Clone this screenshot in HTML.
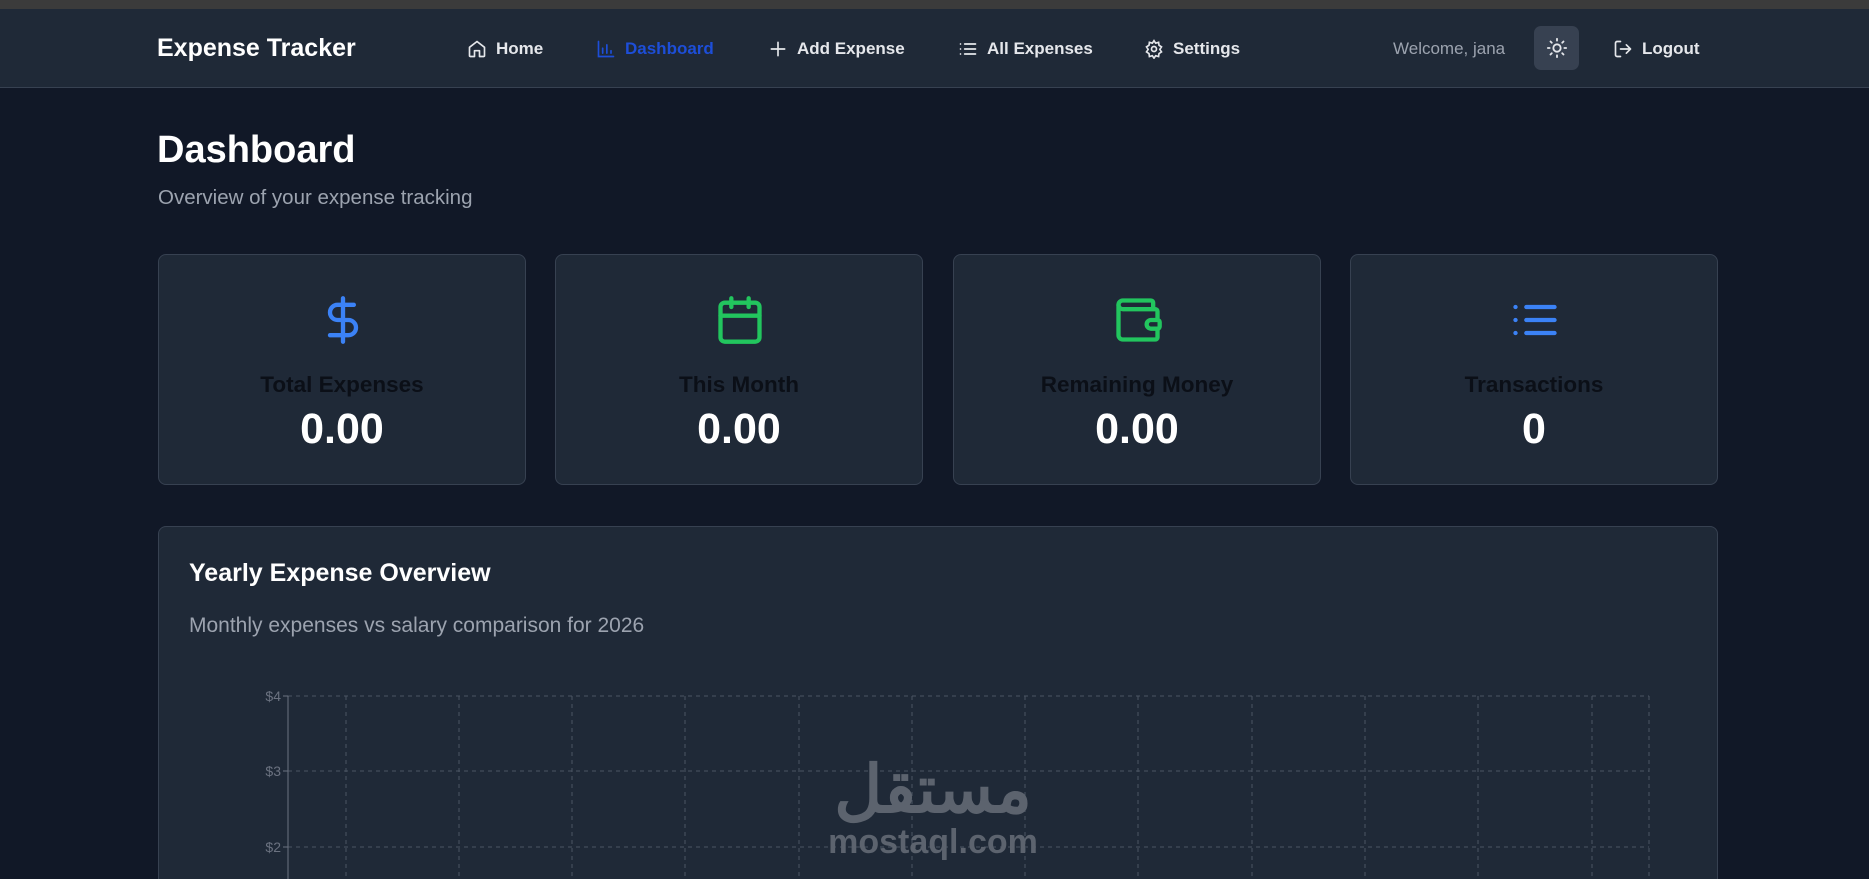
<!DOCTYPE html>
<html><head><meta charset="utf-8"><style>
*{margin:0;padding:0;box-sizing:border-box}
html{width:1869px;height:879px;overflow:hidden}
body{width:1869px;height:879px;overflow:hidden;background:#111827;font-family:"Liberation Sans",sans-serif;position:relative}
.top{position:absolute;left:0;top:0;width:1869px;height:9px;background:#3b3b3b}
nav{position:absolute;left:0;top:9px;width:1869px;height:79px;background:#1f2937;border-bottom:1px solid #374151}
.a{position:absolute;top:0;height:79px;display:flex;align-items:center;color:#e5e7eb;font-size:17px;font-weight:600}
.a svg{margin-right:9px}
.logo{left:157px;font-size:25px;font-weight:700;color:#fff}
h1{position:absolute;left:157px;top:129px;font-size:38px;color:#fff;font-weight:700}
.sub{position:absolute;left:158px;top:186px;font-size:20.5px;color:#9ca3af}
.card{position:absolute;top:254px;width:368px;height:231px;background:#1f2937;border:1px solid #374151;border-radius:8px;text-align:center}
.card svg{position:absolute;left:158px;top:37px}
.lbl{position:absolute;top:117px;width:100%;font-size:22.5px;font-weight:600;color:#0b0f17}
.val{position:absolute;top:150px;width:100%;font-size:43px;font-weight:700;color:#fff}
.big{position:absolute;left:158px;top:526px;width:1560px;height:353px;background:#1f2937;border:1px solid #374151;border-bottom:none;border-radius:8px 8px 0 0}
.big h2{position:absolute;left:30px;top:32px;font-size:25px;color:#fff;font-weight:700}
.big p{position:absolute;left:30px;top:87px;font-size:21px;color:#9ca3af}
</style></head><body>
<div class="top"></div>
<nav>
<div class="a logo">Expense Tracker</div>
<div class="a" style="left:467px"><svg width="20" height="20" viewBox="0 0 24 24" fill="none" stroke="#e5e7eb" stroke-width="2" stroke-linecap="round" stroke-linejoin="round"><path d="M3 10l9-7 9 7v10a1 1 0 0 1-1 1h-5v-7h-6v7H4a1 1 0 0 1-1-1z"/></svg>Home</div>
<div class="a" style="left:596px;color:#1d4ed8"><svg width="20" height="20" viewBox="0 0 24 24" fill="none" stroke="#1d4ed8" stroke-width="2" stroke-linecap="round"><path d="M3 3v18h18M8 17v-6M13 17V7M18 17v-3"/></svg>Dashboard</div>
<div class="a" style="left:768px"><svg width="20" height="20" viewBox="0 0 24 24" fill="none" stroke="#e5e7eb" stroke-width="2" stroke-linecap="round"><path d="M12 4v16M4 12h16"/></svg>Add Expense</div>
<div class="a" style="left:958px"><svg width="20" height="20" viewBox="0 0 24 24" fill="none" stroke="#e5e7eb" stroke-width="2" stroke-linecap="round"><path d="M8 6h13M8 12h13M8 18h13M3 6h.01M3 12h.01M3 18h.01"/></svg>All Expenses</div>
<div class="a" style="left:1144px"><svg width="20" height="20" viewBox="0 0 24 24" fill="none" stroke="#e5e7eb" stroke-width="2"><circle cx="12" cy="12" r="3"/><path d="M12 2l2 3 3.5-1 .5 3.5 3 2-2 3 2 3-3 2-.5 3.5-3.5-1-2 3-2-3-3.5 1L6 17.5l-3-2 2-3-2-3 3-2L6.5 4 10 5z"/></svg>Settings</div>
<div class="a" style="left:1393px;color:#9ca3af;font-weight:400">Welcome, jana</div>
<div style="position:absolute;left:1534px;top:17px;width:45px;height:44px;background:#374151;border-radius:7px;display:flex;align-items:center;justify-content:center"><svg width="22" height="22" viewBox="0 0 24 24" fill="none" stroke="#e5e7eb" stroke-width="2" stroke-linecap="round"><circle cx="12" cy="12" r="4"/><path d="M12 2v2M12 20v2M4.9 4.9l1.4 1.4M17.7 17.7l1.4 1.4M2 12h2M20 12h2M4.9 19.1l1.4-1.4M17.7 6.3l1.4-1.4"/></svg></div>
<div class="a" style="left:1613px"><svg width="20" height="20" viewBox="0 0 24 24" fill="none" stroke="#e5e7eb" stroke-width="2" stroke-linecap="round" stroke-linejoin="round"><path d="M9 21H5a2 2 0 0 1-2-2V5a2 2 0 0 1 2-2h4M16 17l5-5-5-5M21 12H9"/></svg>Logout</div>
</nav>
<h1>Dashboard</h1>
<div class="sub">Overview of your expense tracking</div>

<div class="card" style="left:158px"><svg width="52" height="56" viewBox="0 0 24 24" fill="none" stroke="#3b82f6" stroke-width="2" stroke-linecap="round" stroke-linejoin="round"><path d="M12 2v20M17 5H9.5a3.5 3.5 0 0 0 0 7h5a3.5 3.5 0 0 1 0 7H6"/></svg><div class="lbl">Total Expenses</div><div class="val">0.00</div></div>
<div class="card" style="left:555px"><svg width="52" height="56" viewBox="0 0 24 24" fill="none" stroke="#22c55e" stroke-width="2" stroke-linecap="round" stroke-linejoin="round"><rect x="3" y="4" width="18" height="18" rx="2"/><path d="M16 2v4M8 2v4M3 10h18"/></svg><div class="lbl">This Month</div><div class="val">0.00</div></div>
<div class="card" style="left:953px"><svg width="52" height="56" viewBox="0 0 24 24" fill="none" stroke="#22c55e" stroke-width="2" stroke-linecap="round" stroke-linejoin="round"><path d="M19 7V4a1 1 0 0 0-1-1H5a2 2 0 0 0 0 4h15a1 1 0 0 1 1 1v4h-3a2 2 0 0 0 0 4h3a1 1 0 0 0 1-1v-2a1 1 0 0 0-1-1"/><path d="M3 5v14a2 2 0 0 0 2 2h15a1 1 0 0 0 1-1v-4"/></svg><div class="lbl">Remaining Money</div><div class="val">0.00</div></div>
<div class="card" style="left:1350px"><svg width="52" height="56" viewBox="0 0 24 24" fill="none" stroke="#3b82f6" stroke-width="2" stroke-linecap="round"><path d="M8 6h13M8 12h13M8 18h13M3 6h.01M3 12h.01M3 18h.01"/></svg><div class="lbl">Transactions</div><div class="val">0</div></div>

<div class="big"><h2>Yearly Expense Overview</h2><p>Monthly expenses vs salary comparison for 2026</p></div>
<svg style="position:absolute;left:0;top:0" width="1869" height="879">
<g stroke="#4b5563" stroke-dasharray="4 4" stroke-width="1">
<path d="M288 696H1649M288 771H1649M288 847H1649"/>
<path d="M346 696V879M459 696V879M572 696V879M685 696V879M799 696V879M912 696V879M1025 696V879M1138 696V879M1252 696V879M1365 696V879M1478 696V879M1592 696V879M1649 696V879"/>
</g>
<path d="M288 696V879M283 696H288M283 771H288M283 847H288" stroke="#6b7280"/>
<g fill="#6b7280" font-size="14" text-anchor="end" font-family="Liberation Sans"><text x="281" y="701">$4</text><text x="281" y="776">$3</text><text x="281" y="852">$2</text></g>
<text x="933" y="812" font-size="66" font-weight="700" fill="#5c636e" text-anchor="middle" font-family="Noto Sans CJK SC,sans-serif">مستقل</text>
<text x="933" y="853" font-size="34" font-weight="700" fill="#5c636e" text-anchor="middle" font-family="Liberation Sans">mostaql.com</text>
</svg>
</body></html>
